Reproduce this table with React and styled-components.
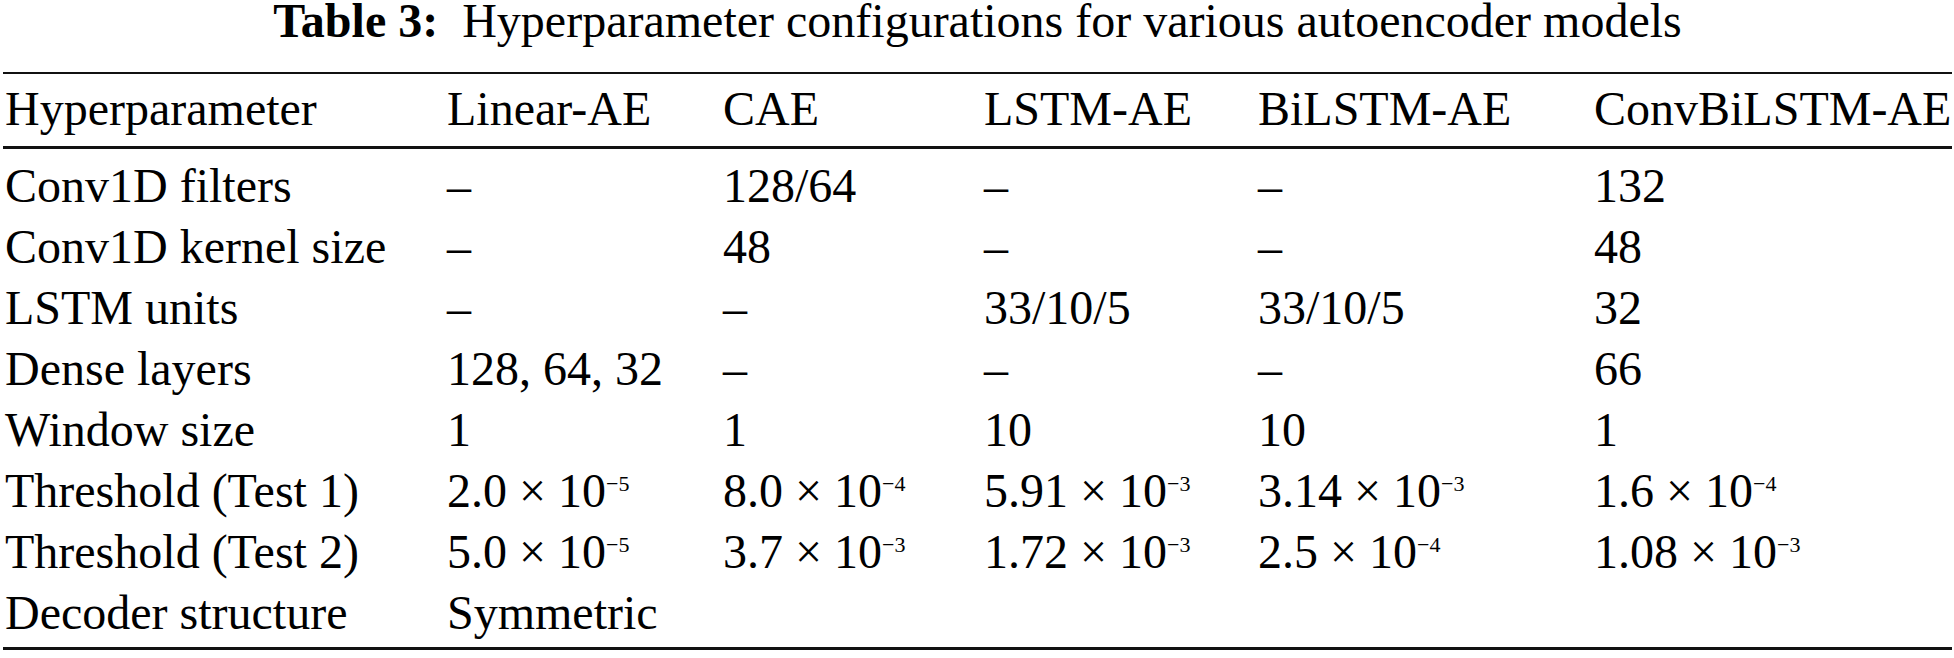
import styled, { createGlobalStyle } from "styled-components"

const GlobalStyle = createGlobalStyle`
    body{
        margin: 0;
        background: #ffffff;
        color: #000000;
    }
`

const columns = ["Linear-AE", "CAE", "LSTM-AE", "BiLSTM-AE", "ConvBiLSTM-AE"]

// value: plain string, or [mantissa, exponent] for a number in scientific notation
const rows = [
    ["Conv1D filters", "–", "128/64", "–", "–", "132"],
    ["Conv1D kernel size", "–", "48", "–", "–", "48"],
    ["LSTM units", "–", "–", "33/10/5", "33/10/5", "32"],
    ["Dense layers", "128, 64, 32", "–", "–", "–", "66"],
    ["Window size", "1", "1", "10", "10", "1"],
    ["Threshold (Test 1)", ["2.0", "5"], ["8.0", "4"], ["5.91", "3"], ["3.14", "3"], ["1.6", "4"]],
    ["Threshold (Test 2)", ["5.0", "5"], ["3.7", "3"], ["1.72", "3"], ["2.5", "4"], ["1.08", "3"]],
    ["Decoder structure", "Symmetric", "", "", "", ""],
]

function Value({ v }) {
    if (Array.isArray(v)) {
        return <>{v[0]} × 10<Exp>−{v[1]}</Exp></>
    }
    return v
}

export default function App() {
    return (
        <>
            <GlobalStyle />
            <Page>
                <Caption><Label>Table 3:</Label>&nbsp;&nbsp;Hyperparameter configurations for various autoencoder models</Caption>
                <Table>
                    <HeadRow>
                        <Cell>Hyperparameter</Cell>
                        {columns.map(c => <Cell key={c}>{c}</Cell>)}
                    </HeadRow>
                    <Body>
                        {rows.map((r, i) => <Row key={i}>
                            {r.map((v, j) => <Cell key={j}><Value v={v} /></Cell>)}
                        </Row>)}
                    </Body>
                </Table>
            </Page>
        </>
    )
}

const Page = styled.div`
    width: 1954px;
    height: 658px;
    overflow: hidden;
`

const Caption = styled.div`
    font-family: "Liberation Serif", serif;
    font-size: 48px;
    line-height: 48px;
    padding-top: 0;
    margin: -3px 0 27px 3px;
    text-align: center;
    width: 1949px;
    white-space: nowrap;
`

const Label = styled.span`
    font-family: "Liberation Serif", serif;
    font-weight: 700;
`

const Table = styled.div`
    margin: 0 2px 0 3px;
    border-top: 2px solid #111;
    border-bottom: 3px solid #111;
`

const Row = styled.div`
    display: grid;
    grid-template-columns: 442px 276px 261px 274px 336px 1fr;
    padding-left: 2px;
`

const HeadRow = styled(Row)`
    padding-top: 4px;
    padding-bottom: 7px;
    border-bottom: 3px solid #111;
`

const Body = styled.div`
    padding: 6px 0 4px;
`

const Cell = styled.div`
    font-family: "Liberation Serif", serif;
    font-size: 48px;
    line-height: 61px;
    white-space: nowrap;
`

const Exp = styled.span`
    font-family: "Liberation Serif", serif;
    font-size: 22px;
    line-height: 0;
    vertical-align: 16px;
`
